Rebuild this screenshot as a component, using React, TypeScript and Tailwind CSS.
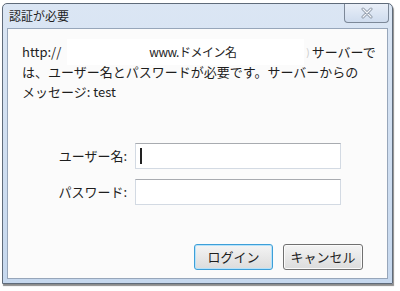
import React from 'react';

const jp = { fontFamily: '"Meiryo UI", "Noto Sans CJK JP", "Noto Sans", sans-serif' };

const CloseGlyph = () => (
  <svg width="14" height="12" viewBox="0 0 14 12">
    <path d="M3 2 L11 10 M11 2 L3 10" stroke="#8b96a5" strokeWidth="3" strokeLinecap="round" fill="none" />
    <path d="M3 2 L11 10 M11 2 L3 10" stroke="#f4f6f9" strokeWidth="1.2" strokeLinecap="round" fill="none" />
  </svg>
);

export default function App() {
  return (
    <div className="w-[400px] h-[291px] bg-white pt-[3px] pl-[2px]" style={jp}>
      {/* window frame */}
      <div className="w-[391px] h-[281px] flex flex-col rounded-t-[5px] border border-[#5f6b7a] bg-gradient-to-b from-[#dbe6f4] to-[#c6d8ee] shadow-[1px_2px_1px_rgba(0,0,0,0.45)]">
        {/* title bar */}
        <div className="h-[24px] flex items-start justify-between shrink-0">
          <span className="pl-[6px] pt-[5px] text-[12px] leading-[14px] text-[#1e1e1e]">認証が必要</span>
          <div className="mr-[3px] w-[45px] h-[19px] flex items-center justify-center rounded-b-[4px] border border-t-0 border-[#7c8898] bg-gradient-to-b from-[#e9eff8] to-[#cfdcee]">
            <CloseGlyph />
          </div>
        </div>

        {/* client area */}
        <div className="mx-[4px] mb-[4px] flex-1 flex flex-col border border-[#97a6ba] bg-[#fbfbfb] text-[13px] text-[#1e1e1e]">
          <div className="pl-[14px] pt-[13px] leading-[20px]">
            <div className="flex items-center h-[20px]">
              <span>http://</span>
              <span className="ml-[6px] w-[237px] h-[26px] bg-white flex items-center pl-[82px] text-[12px] tracking-[-0.5px]">www.ドメイン名</span>
              <span className="text-[#c8c8c8] text-[10px] mx-[2px]">)</span>
              <span>サーバーで</span>
            </div>
            <div className="whitespace-nowrap">は、ユーザー名とパスワードが必要です。サーバーからの</div>
            <div className="whitespace-nowrap">メッセージ: test</div>
          </div>

          <div className="mt-[41px] flex flex-col gap-[10px]">
            <div className="flex items-center">
              <span className="w-[119px] text-right pr-[0px]">ユーザー名:</span>
              <div className="ml-[8px] w-[206px] h-[26px] border border-[#d3dae3] border-t-[#a8abb0] bg-white flex items-center pl-[4px]">
                <div className="w-[2px] h-[16px] bg-[#222]" />
              </div>
            </div>
            <div className="flex items-center">
              <span className="w-[119px] text-right">パスワード:</span>
              <div className="ml-[8px] w-[206px] h-[26px] border border-[#d3dae3] border-t-[#a8abb0] bg-white" />
            </div>
          </div>

          <div className="mt-auto mb-[8px] flex justify-end gap-[10px] pr-[24px]">
            <button className="w-[79px] h-[26px] rounded-[3px] border border-[#3d9fd8] bg-gradient-to-b from-[#f4f4f4] to-[#dcdcdc] shadow-[inset_0_0_0_1px_#b6e2fa] text-[13px] text-[#1e1e1e]">ログイン</button>
            <button className="w-[80px] h-[26px] rounded-[3px] border border-[#707070] bg-gradient-to-b from-[#f4f4f4] to-[#dcdcdc] shadow-[inset_0_0_0_1px_#fbfbfb] text-[13px] text-[#1e1e1e]">キャンセル</button>
          </div>
        </div>
      </div>
    </div>
  );
}
